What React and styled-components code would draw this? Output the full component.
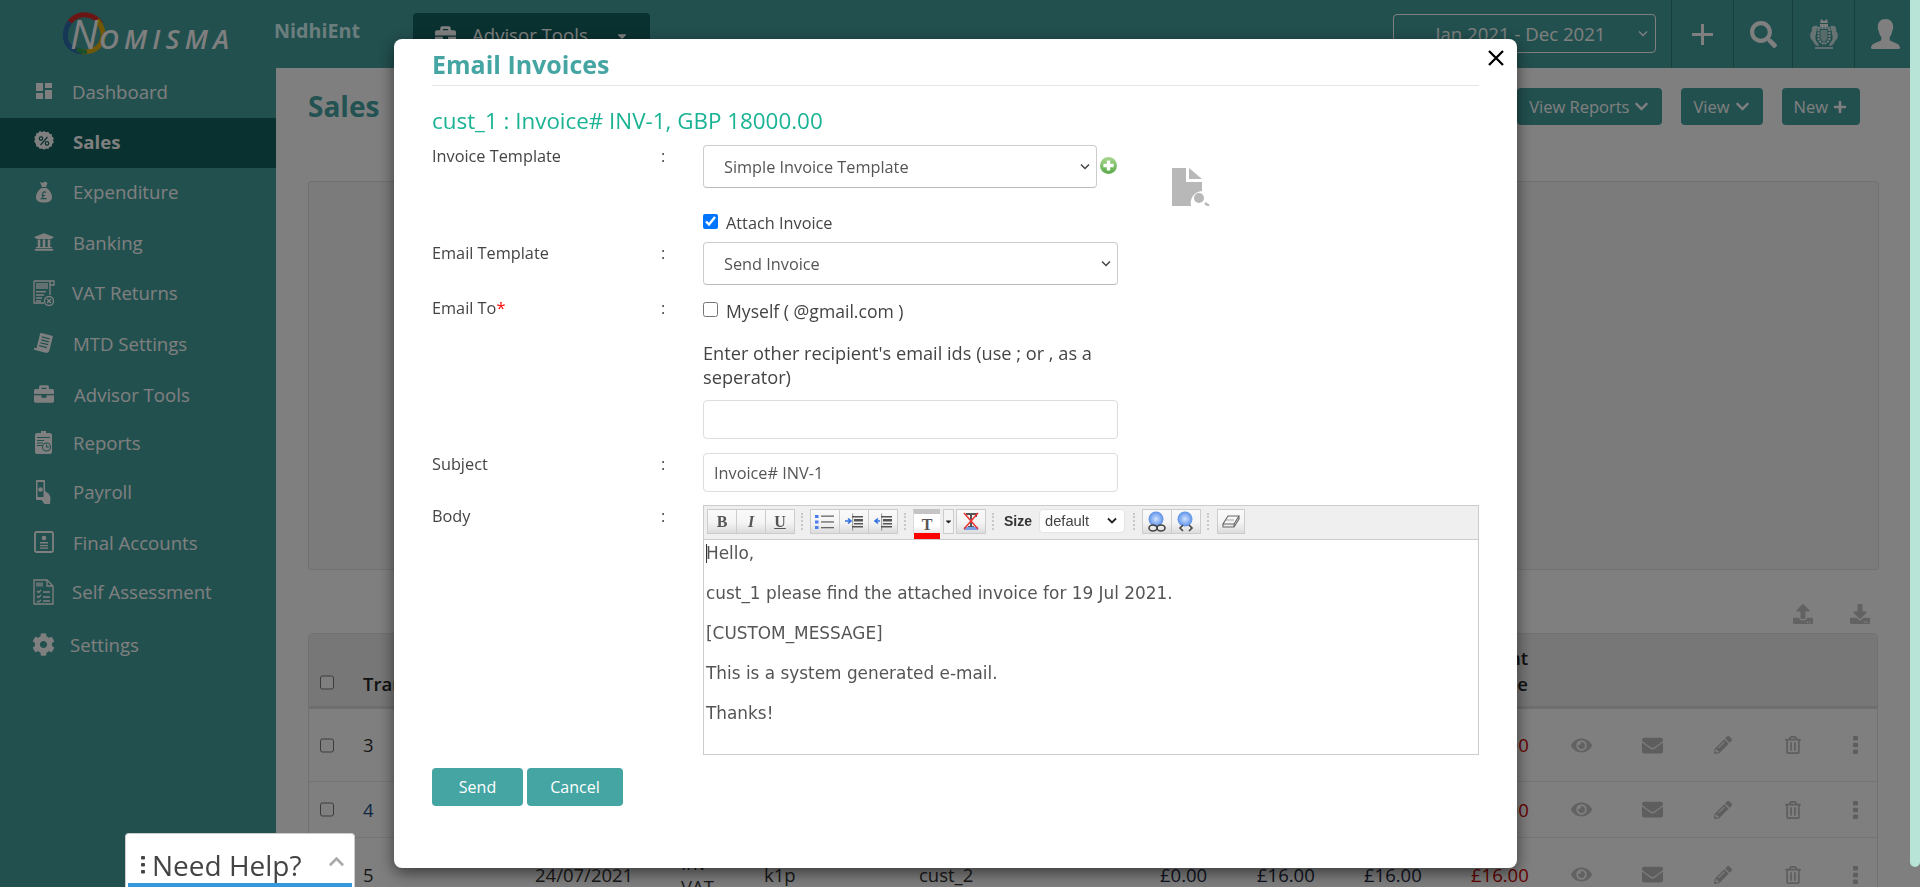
import React from "react";
import styled, { createGlobalStyle } from "styled-components";
import { FaUniversity, FaBriefcase, FaCog, FaSearch, FaChevronDown, FaChevronUp, FaPlus, FaEye, FaEnvelope, FaPencilAlt, FaRegTrashAlt, FaUpload, FaDownload, FaCaretDown } from "react-icons/fa";

const Global = createGlobalStyle`
  html, body { margin: 0; padding: 0; height: 100%; overflow: hidden; background: #fff; }
  body { font-family: "Open Sans", "Liberation Sans", sans-serif; color: #333; }
  * { box-sizing: border-box; }
`;

const chevron = (color, sw) => `url("data:image/svg+xml,%3Csvg xmlns='http://www.w3.org/2000/svg' width='12' height='8' viewBox='0 0 12 8'%3E%3Cpath d='M2 1.500l4 4 4-4' fill='none' stroke='%23${color}' stroke-width='${sw}'/%3E%3C/svg%3E")`;

const Page = styled.div`height: 887px; overflow: hidden; display: flex; flex-direction: column;`;
const Header = styled.header`height: 68px; flex: none; background: #44a09e; display: flex; align-items: stretch; color: #fff;`;
const Logo = styled.div`position: relative; width: 274px; flex: none; padding: 12px 0 0 62px;`;
const LogoWord = styled.div`
  position: absolute; left: 70px; top: 12px; font-style: italic; font-weight: 600; font-size: 27px; line-height: 44px; letter-spacing: 5.2px; color: #fff; white-space: nowrap;
  & > b { font-size: 40px; font-weight: 500; letter-spacing: 1px; line-height: 44px; }
`;
const Org = styled.div`width: 139px; flex: none; font-size: 19.7px; font-weight: 700; line-height: 62px; color: #d8fbfa;`;
const ToolsButton = styled.div`
  width: 237px; height: 50px; margin-top: 13px; background: #126260; border-radius: 4px; display: flex; align-items: flex-start; padding: 10px 22px; font-size: 18.6px; line-height: 24px; gap: 16px; white-space: nowrap;
  & svg { flex: none; margin-top: 2px; }
`;
const HeaderRight = styled.div`margin-left: auto; display: flex; align-items: stretch; padding-right: 4px;`;
const DateSelect = styled.select`
  appearance: none; width: 263px; height: 39px; margin: 14px 15px 0 0; background: transparent ${chevron("ffffff", 1.4)} no-repeat right 6px center; color: #fff; border: 1px solid #fff; border-radius: 4px; font: 18.6px "Open Sans", sans-serif; text-align: center; padding: 0 8px 0 0;
`;
const HeaderCell = styled.div`width: ${p => p.$w}px; border-left: 1px solid #2f7e7c; display: flex; align-items: center; justify-content: center; color: #fff;`;

const Body = styled.div`flex: 1; display: flex; min-height: 0;`;
const Sidebar = styled.nav`width: 276px; flex: none; background: #44a09e;`;
const NavItem = styled.div`
  height: ${p => p.$h}px; display: flex; align-items: center; padding: 0 0 ${p => p.$up ? 4 : 2}px 22px; color: #fff; font-size: 18.6px;
  font-weight: ${p => p.$active ? 700 : 400}; background: ${p => p.$active ? "#126260" : "transparent"};
`;
const NavIcon = styled.span`width: 43px; flex: none; display: flex; justify-content: center; align-items: center;`;
const NavLabel = styled.span`margin-left: ${p => p.$x}px; white-space: nowrap;`;

const Main = styled.main`flex: 1; background: #fff; padding: 20px 41px 0 32px; min-width: 0;`;
const TitleRow = styled.div`height: 37px; display: flex; align-items: center; justify-content: flex-end; gap: 19px; padding-right: 19px;`;
const PageTitle = styled.h1`margin: 0 auto 0 0; font-size: 28px; font-weight: 700; color: #45a5a3; line-height: 37px;`;
const TopButton = styled.div`height: 37px; background: #44a09e; color: #fff; border-radius: 4px; display: flex; align-items: center; gap: 5px; padding: 0 13px 0 12px; font-size: 16.5px; white-space: nowrap;`;
const Panel = styled.div`height: 389px; margin-top: 56px; background: #f6f6f6; border: 1px solid #e2e2e2; border-radius: 3px;`;
const IoRow = styled.div`height: 63px; display: flex; justify-content: flex-end; gap: 37px; padding: 34px 9px 0 0; color: #c4c4c4;`;
const Table = styled.div`border: 1px solid #e2e2e2; border-bottom: 0; border-radius: 5px 5px 0 0; margin-right: 1px;`;
const cols = "54px 172px 146px 83px 155px 241px 97px 107px 107px 74px 72px 71px 69px 72px 53px";
const HeadRow = styled.div`
  height: 75px; display: grid; grid-template-columns: ${cols}; align-items: end; background: #eeeeee; border-bottom: 3px solid #ddd; font-size: 18.5px; font-weight: 600; color: #222; line-height: 26px; padding-bottom: 9px; border-radius: 5px 5px 0 0;
`;
const Row = styled.div`
  height: ${p => p.$h}px; display: grid; grid-template-columns: ${cols}; align-items: center; border-bottom: 1px solid #e8e8e8; font-size: 18.5px; color: #333; line-height: 24px;
`;
const CheckCell = styled.div`padding-left: 11px; display: flex;`;
const HeadCheckCell = styled(CheckCell)`margin-bottom: 7px;`;
const TableCheck = styled.input.attrs({ type: "checkbox" })`width: 14px; height: 15px; margin: 0;`;
const HeadText = styled.div`white-space: pre;`;
const HeadTextEnd = styled.div`white-space: pre; justify-self: end; width: max-content; text-align: right; margin-right: 17px;`;
const IdCell = styled.div`color: ${p => p.$link ? "#1b4f8a" : "#333"};`;
const MultiCell = styled.div`white-space: pre; line-height: 24px;`;
const Money = styled.div`color: ${p => p.$red ? "#cc0000" : "#1c2a44"};`;
const ActionCell = styled.div`display: flex; justify-content: center; color: ${p => p.$soft ? "#c4c4c4" : "#bdbdbd"};`;

const Overlay = styled.div`position: fixed; inset: 0; background: rgba(0,0,0,.5);`;
const Thumb = styled.div`position: fixed; top: 0; right: 0; width: 10px; height: 867px; background: #b8e4d8; border-radius: 0 0 6px 6px;`;

const Modal = styled.section`
  position: fixed; left: 394px; top: 39px; width: 1123px; height: 829px; background: #fff; border-radius: 8px; box-shadow: 0 5px 16px rgba(0,0,0,.55); padding: 10px 38px 0 38px; font-size: 16.3px; color: #444;
`;
const Close = styled.button`position: absolute; top: 11px; right: 11px; width: 18px; height: 16px; padding: 0; border: 0; background: none; color: #000; display: flex;`;
const ModalTitle = styled.h2`margin: 0; font-size: 25px; font-weight: 700; color: #45a5a3; line-height: 31px; padding-bottom: 5px; border-bottom: 1px solid #e5e5e5;`;
const SubTitle = styled.h3`margin: 21px 0 0; font-size: 22.4px; font-weight: 400; color: #1ab394; line-height: 28px; white-space: nowrap;`;
const FormRow = styled.div`display: grid; grid-template-columns: 229px 42px 1fr; margin-top: ${p => p.$mt}px; line-height: 24px;`;
const Label = styled.div`color: #444; margin-top: -1px; & > i { color: #f00; font-style: normal; }`;
const Colon = styled.div`color: #444; margin-top: -1px;`;
const Field = styled.div`display: flex; flex-direction: column; min-width: 0;`;
const InlineField = styled.div`display: flex; align-items: flex-start;`;
const Select = styled.select`
  appearance: none; width: ${p => p.$w}px; height: 43px; background: #fff ${chevron("444444", 1.5)} no-repeat right 5px center; border: 1px solid #ccc; border-bottom-color: #bbb; border-radius: 4px; font: 16.3px "Open Sans", sans-serif; color: #555; padding: 0 0 0 20px; flex: none;
`;
const AddDot = styled.span`flex: none; width: 17px; height: 17px; margin: 12px 0 0 3px; display: flex;`;
const DocPreview = styled.span`flex: none; margin: 23px 0 0 55px; display: flex;`;
const CheckLine = styled.label`display: flex; align-items: center; gap: 8px; height: 24px; width: 415px; margin-top: ${p => p.$mt || 0}px; font-size: ${p => p.$large ? "17.6px" : "inherit"};`;
const Check = styled.input.attrs({ type: "checkbox" })`width: 15px; height: 15px; margin: 0 0 3px 0;`;
const Hint = styled.p`margin: 18px 0 0; width: 415px; font-size: 18.2px; white-space: pre-line;`;
const TextInput = styled.input`
  width: 415px; height: 39px; border: 1px solid #ddd; border-radius: 4px; font: 16.3px "Open Sans", sans-serif; color: #555; padding: 0 10px; margin-top: ${p => p.$mt || 0}px; background: #fff;
`;
const Editor = styled.div`border: 1px solid #ccc; height: 250px; display: flex; flex-direction: column;`;
const Toolbar = styled.div`height: 34px; flex: none; background: #efefef; border-bottom: 1px solid #ccc; display: flex; align-items: flex-start; padding: 3px 0 0 3px;`;
const ToolGroup = styled.div`display: flex; flex: none; height: 25px;`;
const ToolButton = styled.div`
  width: ${p => p.$w || 30}px; height: 25px; border: 1px solid #ccc; background: linear-gradient(#fafafa 0%, #f4f4f4 55%, #dcdcdc 100%);
  display: flex; align-items: center; justify-content: center; font: ${p => p.$i ? "italic " : ""}700 16px "Liberation Serif", serif; color: #555; margin-right: -1px;
  text-decoration: ${p => p.$u ? "underline" : "none"};
`;
const ColorButton = styled.div`
  position: relative; width: 27px; height: 25px; border-top: 5px solid #c4c4c4; border-left: 1px solid #ddd; background: linear-gradient(#fff 0%, #fff 60%, #e4e4e4 100%); font: 700 16px "Liberation Serif", serif; color: #555; display: flex; align-items: center; justify-content: center; padding-top: 2px;
  &::after { content: ""; position: absolute; left: 0; right: 0; top: 19px; height: 6px; background: #f00; }
`;
const ColorArrow = styled.div`width: 11px; height: 25px; margin: 0 2px 0 3px; border: 1px solid #ccc; background: #f4f4f4; display: flex; align-items: center; justify-content: center;`;
const ToolSep = styled.div`width: ${p => p.$w}px; height: 25px; flex: none; position: relative; &::after { content: ""; position: absolute; left: ${p => p.$at}px; top: 4px; height: 17px; border-left: 2px dotted #c8c8c8; }`;
const SizeLabel = styled.b`font: 700 14px/25px "Liberation Sans", sans-serif; color: #333; width: 35px; flex: none;`;
const SizeSelect = styled.select`appearance: none; width: 86px; height: 24px; flex: none; border: 1px solid #e4e4e4; border-radius: 4px; background: #fff ${chevron("222222", 1.8)} no-repeat right 6px center; font: 14.7px "Liberation Sans", sans-serif; color: #444; padding: 0 0 0 5px;`;
const EditorBody = styled.div`flex: 1; padding: 3px 2px; font: 16.9px/20px "DejaVu Sans", sans-serif; color: #555; position: relative; & > p { margin: 0 0 20px; }`;
const Caret = styled.span`position: absolute; left: 2px; top: 4px; width: 1px; height: 19px; background: #333;`;
const Actions = styled.div`display: flex; gap: 4px; margin-top: 13px;`;
const PrimaryButton = styled.button`width: ${p => p.$w}px; height: 38px; border: 0; border-radius: 4px; background: #45a5a3; color: #fff; font: 500 16px "Open Sans", sans-serif; padding: 0;`;

const HelpBox = styled.div`
  position: fixed; left: 125px; top: 833px; width: 230px; height: 54px; background: #fff; border: 1px solid #ccc; border-bottom: 0; border-radius: 4px 4px 0 0; padding: 0 2px; 
`;
const HelpInner = styled.div`height: 53px; border-bottom: 4px solid #3498db; display: flex; align-items: flex-start; padding: 14px 0 0 13px; font-size: 28px; line-height: 34px; color: #444; white-space: nowrap;`;
const HelpDots = styled.span`width: 11px; flex: none; display: flex; margin-top: 8px; color: #444;`;
const HelpChevron = styled.span`margin-left: auto; padding: 5px 7px 0 0; color: #aaa; display: flex;`;

const Svg = ({ w, h, vb, children, style }) => <svg width={w} height={h} viewBox={vb || `0 0 ${w} ${h}`} fill="currentColor" style={style}>{children}</svg>;

const IDash = () => <Svg w={16} h={16}><rect x="0" y="0" width="7" height="8"/><rect x="9" y="0" width="7" height="5"/><rect x="0" y="10" width="7" height="6"/><rect x="9" y="7" width="7" height="9"/></Svg>;
const IPercent = () => <Svg w={20} h={20}><path d="M10 0l2 1.300 2.300-.6 1.200 2 2.300.5.2 2.400 1.800 1.500-.8 2.200.9 2.200-1.800 1.500-.3 2.400-2.300.5-1.200 2-2.300-.5-2 1.300-2-1.300-2.300.5-1.200-2-2.300-.5-.3-2.400L.2 10.500l.9-2.200-.8-2.200 1.800-1.500.2-2.400 2.300-.5 1.200-2L8 1.300z"/><g stroke="#126260" strokeWidth="1.200" fill="none"><circle cx="7" cy="7.600" r="1.700"/><circle cx="13" cy="12.400" r="1.700"/><path d="M13.500 6l-7 8"/></g></Svg>;
const IBag = () => <Svg w={16} h={22}><path d="M4 1l2.500 1L9 .5 11.500 2 10 6H6zM5.500 7h5c3 2 5.500 5.500 5.500 9 0 4-3 5.500-8 5.500S0 20 0 16c0-3.500 2.500-7 5.500-9z"/><path d="M10 11.500c-1-1.200-3.400-.8-3.300 1.300 0 1.200.5 2 .2 3.500-.1.600-.6 1-1.100 1.300h4.700M5.500 14.500h3.500" stroke="#44a09e" strokeWidth="1.200" fill="none"/></Svg>;
const IVat = () => <Svg w={22} h={26}><g fill="none" stroke="currentColor" strokeWidth="1.300"><path d="M1 1h16v14M1 1v22h10M17 1h4v4h-4"/><circle cx="16" cy="21" r="4.500"/><path d="M14 19l4 4M18 19l-4 4M3 15h8M3 18h6M3 21h5"/></g><rect x="3" y="3" width="12" height="6" opacity=".7"/><rect x="3" y="11" width="10" height="1.400"/></Svg>;
const IMtd = () => <Svg w={20} h={20}><g transform="rotate(14 10 10)"><path d="M4 1h13v15c0 2-1 3-3 3H2c-1.500 0-2-1-2-2h4zM6.500 4v1.300h8V4zm0 3v1.300h8V7zm0 3v1.300h8V10zm-.5 3v1.300h8V13z" fillRule="evenodd"/></g></Svg>;
const IClip = () => <Svg w={17} h={23}><path d="M6 0h5v2h4c1 0 2 .8 2 2v17c0 1-1 2-2 2H2c-1 0-2-1-2-2V4c0-1.200 1-2 2-2h4z"/><g stroke="#44a09e" strokeWidth="1.100" fill="none"><path d="M2 6.500h13M2 9.500h7M2 12h6M2 14.500h5"/><circle cx="11.500" cy="16" r="4"/><path d="M11.500 13.500V16h2.500"/></g></Svg>;
const IPay = () => <Svg w={15} h={24}><path d="M0 1c0-.6.5-1 1-1h7c.6 0 1 .5 1 1v10l4 3 1.500 3.500L14 24H8.500l-3-4H1c-.5 0-1-.5-1-1z"/><rect x="1.500" y="2" width="6" height="15" rx=".5" fill="#44a09e"/><circle cx="4.500" cy="9.500" r="2.300"/></Svg>;
const IFinal = () => <Svg w={20} h={22}><rect x="1" y="1" width="18" height="20" rx="1.500" fill="none" stroke="currentColor" strokeWidth="1.800"/><circle cx="10" cy="7" r="2.300"/><path d="M6 11h8v1.500H6zM6 14h8v1.300H6zM6 16.500h8v1.300H6z"/></Svg>;
const ISelf = () => <Svg w={22} h={26}><g fill="none" stroke="currentColor" strokeWidth="1.300"><path d="M1 1h13l6 6v18H1zM14 1v6h6"/><path d="M4 12l1.500 1.500L8 11M4 17l1.500 1.500L8 16M4 22l1.500 1L8 21M10 13h7M10 18h7M10 22h7"/></g><rect x="3" y="3.500" width="7" height="4" opacity=".7"/></Svg>;
const ICrest = () => <Svg w={30} h={32}><g opacity=".95"><path d="M12 1l3 2 3-2 1 4h-8z"/><rect x="11" y="6" width="8" height="3"/><path d="M9.500 10h11v10c0 3-3 5-5.500 6-2.500-1-5.500-3-5.500-6z" fill="none" stroke="currentColor" strokeWidth="2" strokeDasharray="2 1"/><path d="M11.500 12h7v8c0 1.500-2 3-3.500 4-1.500-1-3.500-2.500-3.500-4z" opacity=".6"/><path d="M8 8C4 7 2 10 3 13c-3 3-2 8 1 10 1 3 3 5 6 5l-1-3c-3-2-3-6-2-9 0-3 1-5 2-7zM22 8c4-1 6 2 5 5 3 3 2 8-1 10-1 3-3 5-6 5l1-3c3-2 3-6 2-9 0-3-1-5-2-7z" opacity=".8"/><path d="M6 29h18v2H6z" opacity=".7"/></g></Svg>;
const IUser = () => <Svg w={29} h={30}><path d="M14.500 0c5 0 7.700 3.500 7.700 8 0 2.200-.5 3.500-1.200 4.800-.3 2-.8 3.600-2.300 5.200v3c1 2 9.800 2.500 10.300 7.500 0 .8-.4 1.500-1.500 1.500H1.500C.4 30 0 29.300 0 28.500 .5 23.500 9.300 23 10.300 21v-3c-1.500-1.600-2-3.200-2.300-5.200-.7-1.300-1.200-2.600-1.200-4.800 0-4.500 2.700-8 7.700-8z"/></Svg>;
const IThinPlus = () => <Svg w={21} h={21}><path d="M9 0h3v9h9v3h-9v9H9v-9H0V9h9z"/></Svg>;
const IDots = () => <Svg w={5} h={18}><rect x="0" y="0" width="5" height="4.500" rx="1"/><rect x="0" y="6.700" width="5" height="4.500" rx="1"/><rect x="0" y="13.500" width="5" height="4.500" rx="1"/></Svg>;
const IHelpDots = () => <Svg w={4} h={18}><rect x="0" y="0" width="4" height="3.600" rx="1"/><rect x="0" y="7" width="4" height="3.600" rx="1"/><rect x="0" y="14" width="4" height="3.600" rx="1"/></Svg>;
const IX = () => <svg width="16" height="16" viewBox="0 0 16 16" stroke="currentColor" strokeWidth="2.300" fill="none"><path d="M1 1l14 14M15 1L1 15"/></svg>;

const LogoRing = () => (
  <svg width="44" height="43" viewBox="0 0 44 43" fill="none" strokeWidth="5">
    <path d="M6 13C10 5 18 2 25 3c6 1 11 4 14 9" stroke="#d62a2a" />
    <path d="M8 10C2 18 2 28 7 34c3 3 7 5 13 6" stroke="#2d70ad" />
    <path d="M35 8c6 7 8 16 4 23-3 6-9 9-19 9" stroke="#e0b010" />
    <path d="M15 37c3 2 6 3 10 3" stroke="#39a050" strokeWidth="4" />
  </svg>
);
const AddIcon = () => (
  <svg width="17" height="17" viewBox="0 0 15 15">
    <defs><linearGradient id="addg" x1="0" y1="0" x2="0" y2="1"><stop offset="0" stopColor="#a8d890"/><stop offset="1" stopColor="#58a848"/></linearGradient></defs>
    <circle cx="7.500" cy="7.500" r="7.500" fill="url(#addg)"/><path d="M6 3h3v3h3v3H9v3H6V9H3V6h3z" fill="#fff"/>
  </svg>
);
const DocIcon = () => (
  <svg width="38" height="38" viewBox="0 0 38 38" style={{ filter: "blur(.4px)" }}>
    <path d="M0 0h14v14h16v9a12 12 0 0 0-11 15H0z" fill="#b8b8b8"/><path d="M17 0l13 11H17z" fill="#b8b8b8"/>
    <circle cx="27" cy="30" r="5" fill="#b8b8b8"/><path d="M33 35l4 3" stroke="#b8b8b8" strokeWidth="2.500"/>
  </svg>
);
const IList = () => <Svg w={20} h={16}><g fill="#4a7df0"><rect x="0" y="1" width="3.500" height="3"/><rect x="0" y="6.500" width="3.500" height="3"/><rect x="0" y="12" width="3.500" height="3"/></g><g fill="#666"><rect x="6" y="1.500" width="13" height="1.300"/><rect x="6" y="7.300" width="13" height="1.300"/><rect x="6" y="13" width="13" height="1.300"/></g></Svg>;
const IIndent = ({ out }) => <Svg w={20} h={18}><g fill="#555"><rect x="8" y="0.500" width="1.200" height="17" opacity=".5"/><rect x="8" y="3" width="11" height="1.500"/><rect x="10" y="6" width="9" height="2.500"/><rect x="10" y="10" width="9" height="1.500"/><rect x="8" y="13" width="11" height="1.500"/></g><path d={out ? "M7 8H3M5 5.500L2 8l3 2.500" : "M1 8h5M4 5.500L7 8l-3 2.500"} fill="none" stroke="#3070e0" strokeWidth="1.600"/></Svg>;
const IClearColor = () => (
  <svg width="18" height="19" viewBox="0 0 18 19"><path d="M4 2h10v3M9 2v13M6 15h6" fill="none" stroke="#555" strokeWidth="2"/><rect x="2" y="15" width="14" height="3" fill="#7aa0e8"/><path d="M2 1l14 16M16 1L2 17" stroke="#e33" strokeWidth="1.500"/></svg>
);
const ILink = ({ un }) => (
  <svg width="24" height="22" viewBox="0 0 22 22"><defs><radialGradient id={un ? "ga" : "gb"}><stop offset="0" stopColor="#cfe2ff"/><stop offset="1" stopColor="#5a90e8"/></radialGradient></defs><circle cx="10" cy="8" r="7.500" fill={`url(#${un ? "ga" : "gb"})`}/>
  {un ? <g fill="none" stroke="#444" strokeWidth="1.600"><path d="M8 14l-3 3 3 3M14 14l3 3-3 3"/></g> : <g fill="none" stroke="#444" strokeWidth="1.600"><ellipse cx="7" cy="17" rx="4" ry="3"/><ellipse cx="15" cy="17" rx="4" ry="3"/></g>}</svg>
);
const IEraser = () => <svg width="18" height="14" viewBox="0 0 18 14" fill="none" stroke="#666" strokeWidth="1.100"><path d="M6 1h11l-5 8H1zM1 9v3h11l5-8v-3M12 9v3"/><path d="M4 5h8" opacity=".5"/></svg>;

const nav = [
  ["Dashboard", <IDash />, 50, 0, true], ["Sales", <IPercent />, 50, 1, true], ["Expenditure", <IBag />, 49, 1],
  ["Banking", <FaUniversity size={20} />, 52, 1], ["VAT Returns", <IVat />, 49, 0], ["MTD Settings", <IMtd />, 52, 1],
  ["Advisor Tools", <FaBriefcase size={20} />, 50, 2], ["Reports", <IClip />, 47, 1], ["Payroll", <IPay />, 51, 1],
  ["Final Accounts", <IFinal />, 50, 1], ["Self Assessment", <ISelf />, 49, 0], ["Settings", <FaCog size={23} />, 56, -2],
];
const Acts = () => (
  <>
    <ActionCell $soft><FaEye size={21} /></ActionCell>
    <ActionCell><FaEnvelope size={21} /></ActionCell>
    <ActionCell><FaPencilAlt size={18} /></ActionCell>
    <ActionCell><FaRegTrashAlt size={18} /></ActionCell>
    <ActionCell><IDots /></ActionCell>
  </>
);
const Sep = ({ w, at }) => <ToolSep $w={w} $at={at} />;

export default function App() {
  return (
    <Page>
      <Global />
      <Header>
        <Logo><LogoRing /><LogoWord><b>N</b>OMISMA</LogoWord></Logo>
        <Org>NidhiEnt</Org>
        <ToolsButton><FaBriefcase size={21} />Advisor Tools<FaCaretDown size={14} style={{ marginLeft: 11, marginTop: 6 }} /></ToolsButton>
        <HeaderRight>
          <DateSelect defaultValue="a"><option value="a">Jan 2021 - Dec 2021</option></DateSelect>
          <HeaderCell $w={62}><IThinPlus /></HeaderCell>
          <HeaderCell $w={59}><FaSearch size={27} /></HeaderCell>
          <HeaderCell $w={62}><ICrest /></HeaderCell>
          <HeaderCell $w={62}><IUser /></HeaderCell>
        </HeaderRight>
      </Header>
      <Body>
        <Sidebar>
          {nav.map(([label, icon, h, x, up]) => (
            <NavItem key={label} $h={h} $up={up} $active={label === "Sales"}>
              <NavIcon>{icon}</NavIcon>
              <NavLabel $x={7 + x}>{label}</NavLabel>
            </NavItem>
          ))}
        </Sidebar>
        <Main>
          <TitleRow>
            <PageTitle>Sales</PageTitle>
            <TopButton>View Reports <FaChevronDown size={15} /></TopButton>
            <TopButton>View <FaChevronDown size={15} /></TopButton>
            <TopButton>New <FaPlus size={14} /></TopButton>
          </TitleRow>
          <Panel />
          <IoRow><FaUpload size={20} /><FaDownload size={20} /></IoRow>
          <Table>
            <HeadRow>
              <HeadCheckCell><TableCheck /></HeadCheckCell>
              <HeadText>Transaction</HeadText><HeadText>Date</HeadText><HeadText>Type</HeadText><HeadText>Ref</HeadText><HeadText>Customer</HeadText>
              <HeadText>VAT</HeadText><HeadText>Net</HeadText><HeadText>Total</HeadText>
              <HeadTextEnd>{"Amount\nDue"}</HeadTextEnd>
            </HeadRow>
            <Row $h={73}>
              <CheckCell><TableCheck /></CheckCell><IdCell>3</IdCell><div /><div /><div /><div /><div /><div /><div />
              <Money $red>£16.00</Money><Acts />
            </Row>
            <Row $h={56}>
              <CheckCell><TableCheck /></CheckCell><IdCell $link>4</IdCell><div /><div /><div /><div /><div /><div /><div />
              <Money $red>£16.00</Money><Acts />
            </Row>
            <Row $h={74}>
              <CheckCell><TableCheck /></CheckCell><IdCell>5</IdCell><div>24/07/2021</div><MultiCell>{"Inv\nVAT"}</MultiCell><div>k1p</div><div>cust_2</div>
              <Money>£0.00</Money><Money>£16.00</Money><Money>£16.00</Money><Money $red>£16.00</Money><Acts />
            </Row>
          </Table>
        </Main>
      </Body>
      <Overlay />
      <Thumb />
      <Modal>
        <Close aria-label="Close"><IX /></Close>
        <ModalTitle>Email Invoices</ModalTitle>
        <SubTitle>cust_1 : Invoice# INV-1, GBP 18000.00</SubTitle>
        <FormRow $mt={10}>
          <Label>Invoice Template</Label><Colon>:</Colon>
          <Field>
            <InlineField>
              <Select $w={394} defaultValue="a"><option value="a">Simple Invoice Template</option></Select>
              <AddDot><AddIcon /></AddDot>
              <DocPreview><DocIcon /></DocPreview>
            </InlineField>
          </Field>
        </FormRow>
        <FormRow $mt={5}>
          <div /><div />
          <Field><CheckLine><Check defaultChecked />Attach Invoice</CheckLine></Field>
        </FormRow>
        <FormRow $mt={7}>
          <Label>Email Template</Label><Colon>:</Colon>
          <Field><Select $w={415} defaultValue="a"><option value="a">Send Invoice</option></Select></Field>
        </FormRow>
        <FormRow $mt={12}>
          <Label>Email To<i>*</i></Label><Colon>:</Colon>
          <Field>
            <CheckLine $mt={2} $large><Check />Myself ( @gmail.com )</CheckLine>
            <Hint>{"Enter other recipient's email ids (use ; or , as a\nseperator)"}</Hint>
            <TextInput $mt={11} />
          </Field>
        </FormRow>
        <FormRow $mt={14}>
          <Label>Subject</Label><Colon>:</Colon>
          <Field><TextInput defaultValue="Invoice# INV-1" /></Field>
        </FormRow>
        <FormRow $mt={13}>
          <Label>Body</Label><Colon>:</Colon>
          <Field>
            <Editor>
              <Toolbar>
                <ToolGroup><ToolButton>B</ToolButton><ToolButton $i>I</ToolButton><ToolButton $u>U</ToolButton></ToolGroup>
                <Sep w={16} at={7} />
                <ToolGroup><ToolButton><IList /></ToolButton><ToolButton><IIndent /></ToolButton><ToolButton><IIndent out /></ToolButton></ToolGroup>
                <Sep w={16} at={7} />
                <ToolGroup><ColorButton>T</ColorButton><ColorArrow><FaCaretDown size={9} color="#222" /></ColorArrow><ToolButton><IClearColor /></ToolButton></ToolGroup>
                <Sep w={19} at={7} />
                <SizeLabel>Size</SizeLabel>
                <SizeSelect defaultValue="a"><option value="a">default</option></SizeSelect>
                <Sep w={17} at={8} />
                <ToolGroup><ToolButton><ILink /></ToolButton><ToolButton><ILink un /></ToolButton></ToolGroup>
                <Sep w={17} at={7} />
                <ToolGroup><ToolButton $w={28}><IEraser /></ToolButton></ToolGroup>
              </Toolbar>
              <EditorBody>
                <Caret />
                <p>Hello,</p>
                <p>cust_1 please find the attached invoice for 19 Jul 2021.</p>
                <p>[CUSTOM_MESSAGE]</p>
                <p>This is a system generated e-mail.</p>
                <p>Thanks!</p>
              </EditorBody>
            </Editor>
          </Field>
        </FormRow>
        <Actions>
          <PrimaryButton $w={91}>Send</PrimaryButton>
          <PrimaryButton $w={96}>Cancel</PrimaryButton>
        </Actions>
      </Modal>
      <HelpBox>
        <HelpInner>
          <HelpDots><IHelpDots /></HelpDots>
          Need Help?
          <HelpChevron><FaChevronUp size={17} /></HelpChevron>
        </HelpInner>
      </HelpBox>
    </Page>
  );
}
